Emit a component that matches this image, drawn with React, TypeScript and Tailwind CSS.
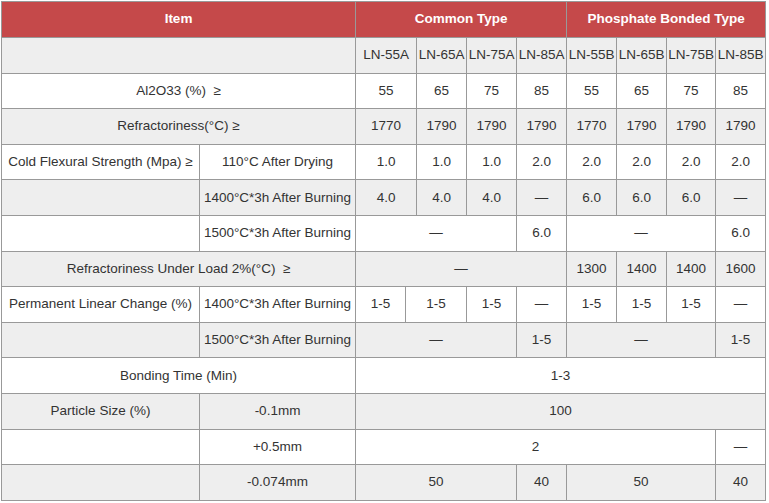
const DASH = '—';

type Cell = { t: string; span?: number };

const grades = ['LN-55A', 'LN-65A', 'LN-75A', 'LN-85A', 'LN-55B', 'LN-65B', 'LN-75B', 'LN-85B'];

// each value row: [first cell(s), ...values]; first entry spans A+B unless split
const rows: { lead: Cell[]; vals: Cell[] }[] = [
  { lead: [{ t: '', span: 2 }], vals: grades.map((g, i) => ({ t: g, span: i === 0 ? 2 : 1 })) },
  {
    lead: [{ t: 'Al2O33 (%)\u00a0\u00a0≥', span: 2 }],
    vals: ['55', '65', '75', '85', '55', '65', '75', '85'].map((t, i) => ({ t, span: i === 0 ? 2 : 1 })),
  },
  {
    lead: [{ t: 'Refractoriness(°C) ≥', span: 2 }],
    vals: ['1770', '1790', '1790', '1790', '1770', '1790', '1790', '1790'].map((t, i) => ({ t, span: i === 0 ? 2 : 1 })),
  },
  {
    lead: [{ t: 'Cold Flexural Strength (Mpa) ≥' }, { t: '110°C After Drying' }],
    vals: ['1.0', '1.0', '1.0', '2.0', '2.0', '2.0', '2.0', '2.0'].map((t, i) => ({ t, span: i === 0 ? 2 : 1 })),
  },
  {
    lead: [{ t: '' }, { t: '1400°C*3h After Burning' }],
    vals: ['4.0', '4.0', '4.0', DASH, '6.0', '6.0', '6.0', DASH].map((t, i) => ({ t, span: i === 0 ? 2 : 1 })),
  },
  {
    lead: [{ t: '' }, { t: '1500°C*3h After Burning' }],
    vals: [{ t: DASH, span: 4 }, { t: '6.0' }, { t: DASH, span: 3 }, { t: '6.0' }],
  },
  {
    lead: [{ t: 'Refractoriness Under Load 2%(°C)\u00a0\u00a0≥', span: 2 }],
    vals: [{ t: DASH, span: 5 }, { t: '1300' }, { t: '1400' }, { t: '1400' }, { t: '1600' }],
  },
  {
    lead: [{ t: 'Permanent Linear Change (%)' }, { t: '1400°C*3h After Burning' }],
    vals: [
      { t: '1-5' },
      { t: '1-5', span: 2 },
      { t: '1-5' },
      { t: DASH },
      { t: '1-5' },
      { t: '1-5' },
      { t: '1-5' },
      { t: DASH },
    ],
  },
  {
    lead: [{ t: '' }, { t: '1500°C*3h After Burning' }],
    vals: [{ t: DASH, span: 4 }, { t: '1-5' }, { t: DASH, span: 3 }, { t: '1-5' }],
  },
  { lead: [{ t: 'Bonding Time (Min)', span: 2 }], vals: [{ t: '1-3', span: 9 }] },
  { lead: [{ t: 'Particle Size (%)' }, { t: '-0.1mm' }], vals: [{ t: '100', span: 9 }] },
  { lead: [{ t: '' }, { t: '+0.5mm' }], vals: [{ t: '2', span: 8 }, { t: DASH }] },
  {
    lead: [{ t: '' }, { t: '-0.074mm' }],
    vals: [{ t: '50', span: 4 }, { t: '40' }, { t: '50', span: 3 }, { t: '40' }],
  },
];

const colWidths = ['w-[198px]', 'w-[156px]', 'w-[50px]', 'w-[11px]', 'w-[50px]', 'w-[50px]', 'w-[50px]', 'w-[50px]', 'w-[50px]', 'w-[49px]', 'w-[50px]'];

export default function App() {
  return (
    <div className="bg-white pl-px pt-px" style={{ fontFamily: '"Liberation Sans", Arial, sans-serif' }}>
      <table className="table-fixed border-collapse w-[765px] text-[13.5px] text-[#333]">
        <colgroup>
          {colWidths.map((w, i) => (
            <col key={i} className={w} />
          ))}
        </colgroup>
        <thead>
          <tr className="h-[36px] bg-[#c5494a] text-white font-bold">
            <th colSpan={2} className="border border-[#999] p-0 text-center">Item</th>
            <th colSpan={5} className="border border-[#999] p-0 text-center">Common Type</th>
            <th colSpan={4} className="border border-[#999] p-0 text-center">Phosphate Bonded Type</th>
          </tr>
        </thead>
        <tbody>
          {rows.map((r, ri) => (
            <tr key={ri} className={`h-[35.6px] ${ri % 2 === 0 ? 'bg-[#eeeeee]' : 'bg-white'}`}>
              {[...r.lead, ...r.vals].map((c, ci) => (
                <td
                  key={ci}
                  colSpan={c.span ?? 1}
                  className="border border-[#999] p-0 text-center whitespace-nowrap overflow-visible"
                >
                  {c.t}
                </td>
              ))}
            </tr>
          ))}
        </tbody>
      </table>
    </div>
  );
}
